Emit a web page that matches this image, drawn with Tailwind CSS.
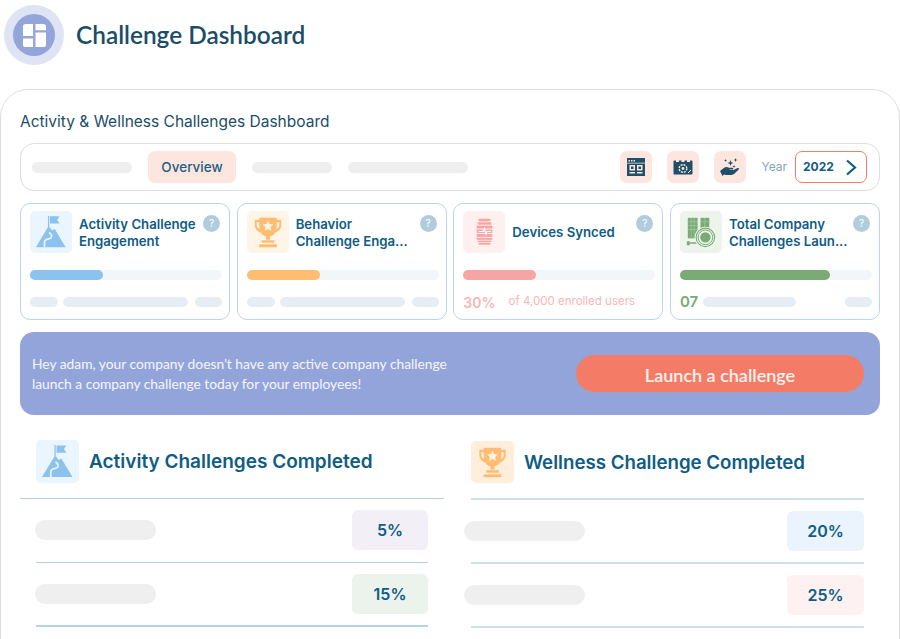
<!DOCTYPE html>
<html lang="en">
<head>
    <meta charset="UTF-8">
    <meta name="viewport" content="width=device-width, initial-scale=1.0">
    <title>Challenge Dashboard</title>
    <script src="https://cdn.jsdelivr.net/npm/@tailwindcss/browser@4"></script>
</head>
<body class="bg-white font-['Inter',sans-serif] h-[639px] overflow-hidden">
    <!-- shared icons -->
    <svg class="hidden">
        <symbol id="ico-mountain" viewBox="0 0 43 43">
            <path fill="#8bc3ee" d="M18.400 5h1.300v11l3 4 2.600-1.600L36.500 37H6l12.400-20.500z"/>
            <path fill="#8bc3ee" d="M20.500 5.500h9.800l-2.400 3.600 2.400 3.600h-9.800z"/>
            <path fill="none" stroke="#eaf4fd" stroke-width="1.700" d="M19.500 22c2.500 1.500 3 3.500 2.200 5.200-1 1.800-6 .8-6.700 3.800-.3 2-.2 4-.2 6"/>
        </symbol>
        <symbol id="ico-trophy" viewBox="0 0 43 43">
            <path fill="#ffbd72" d="M12.500 7h18v2h4.500v5.500c0 4-3 6.500-6 7.500-1 2-3 3.500-5.500 4v3.500h-4v-3.500c-2.500-.5-4.500-2-5.500-4-3-1-6-3.500-6-7.500V9h4.500zm-2.500 4.500v3c0 1.500 1 3 2.800 4-.2-2-.3-4.500-.3-7zm23 0h-2.500c0 2.500-.1 5-.3 7 1.800-1 2.800-2.500 2.800-4z"/>
            <path fill="#ffbd72" d="M15 30h13v2.500H15zM12.500 34h18v3h-18z"/>
            <path fill="#fff3e6" d="M21.500 9.800l1.700 3.500 3.800.5-2.800 2.600.7 3.800-3.400-1.800-3.400 1.800.7-3.800-2.800-2.600 3.800-.5z"/>
        </symbol>
        <symbol id="ico-watch" viewBox="0 0 43 43">
            <g fill="#f6a5a5">
                <rect x="16" y="8" width="12" height="2.500" rx=".5"/>
                <rect x="15" y="11.500" width="14" height="2.500"/>
                <rect x="14" y="15" width="16" height="3"/>
                <rect x="14" y="19" width="16" height="3.500"/>
                <rect x="14" y="23.500" width="16" height="3"/>
                <rect x="14" y="27.500" width="16" height="2"/>
                <rect x="15" y="30.300" width="14" height="1.500"/>
                <rect x="16" y="32.500" width="12" height="2"/>
            </g>
            <path fill="none" stroke="#fff" stroke-width="1.100" d="M16 21h5l1-3 1.500 6 1-3h4"/>
        </symbol>
        <symbol id="ico-company" viewBox="0 0 43 43">
            <g fill="#7aab75">
                <rect x="8" y="7" width="10" height="21"/>
                <rect x="21" y="7" width="9" height="11"/>
                <rect x="7" y="31" width="3" height="4"/>
                <rect x="10" y="32" width="8" height="1.500"/>
            </g>
            <path stroke="#a9c9a6" stroke-width=".7" d="M11.500 7v21M14.500 7v21M25.500 7v11M8 11h10M8 15h10M8 19h10M21 11h9"/>
            <circle cx="26" cy="27" r="11" fill="#edf4ec"/>
            <circle cx="26" cy="27" r="9.500" fill="none" stroke="#7aab75" stroke-width="1.100"/>
            <circle cx="26" cy="27" r="7.500" fill="none" stroke="#7aab75" stroke-width="1"/>
            <circle cx="26" cy="27" r="5.300" fill="#7aab75"/>
        </symbol>
    </svg>

    <!-- page title -->
    <header class="flex items-center gap-3 pl-1 pt-[5px]">
        <div class="w-[60px] h-[60px] rounded-full bg-[#dfe4f4] flex items-center justify-center">
            <div class="w-[42px] h-[42px] rounded-full bg-[#94a5da] flex items-center justify-center">
                <svg width="25" height="25" viewBox="0 0 26 26" fill="#fff">
                    <path d="M4 1h7.500v12.500H1V4a3 3 0 0 1 3-3z"/>
                    <path d="M14 1h8a3 3 0 0 1 3 3v3.500H14z"/>
                    <path d="M1 16h10.500v9H3a2 2 0 0 1-2-2z"/>
                    <path d="M14 10h11v13a2 2 0 0 1-2 2h-9z"/>
                </svg>
            </div>
        </div>
        <h1 class="font-['Lato',sans-serif] font-semibold text-[24.400px] leading-none text-[#1b4d68]">Challenge Dashboard</h1>
    </header>

    <main class="mt-6 h-[560px] border border-[#dedede] rounded-t-[28px] px-[19px] pt-[23px]">
        <h2 class="text-[15.500px] leading-[18px] text-[#1b4d68]">Activity &amp; Wellness Challenges Dashboard</h2>

        <!-- tabs -->
        <div class="mt-[12px] h-[48px] border border-[#dedede] rounded-[14px] flex items-center pl-[11px] pr-[12px]">
            <div class="w-[100px] h-[11px] rounded-full bg-[#eeeeee]"></div>
            <div class="ml-4 w-[88px] h-[32px] rounded-[7px] bg-[#fde5e0] flex items-center justify-center text-[13.500px] font-medium text-[#1c5f80]">Overview</div>
            <div class="ml-4 w-[80px] h-[11px] rounded-full bg-[#eeeeee]"></div>
            <div class="ml-4 w-[120px] h-[11px] rounded-full bg-[#eeeeee]"></div>

            <div class="ml-auto w-8 h-8 rounded-[7px] bg-[#fde5e0] flex items-center justify-center">
                <svg width="18" height="18" viewBox="0 0 18 18">
                    <path fill="#1f5068" d="M0 0h18v18H0z"/>
                    <path fill="#fde5e0" d="M1.500 2h1.500v1.500H1.500zM4 2h1.500v1.500H4zM6.500 2H8v1.500H6.500zM0 4.800h18v.8H0zM2.500 7h5.500v5.500H2.500zM10 7h5.500v5.500H10zM2.500 14h5.500v1.500H2.500zM10 14h5.500v1.500H10z"/>
                    <path fill="#1f5068" d="M4 8.500h2.500v2.500H4zM11.500 8.500H14v2.500h-2.500z"/>
                </svg>
            </div>
            <div class="ml-[15px] w-8 h-8 rounded-[7px] bg-[#fde5e0] flex items-center justify-center">
                <svg width="20" height="18" viewBox="0 0 20 18">
                    <path fill="#1f5068" d="M1.500 2.500h17a1 1 0 0 1 1 1v12a1 1 0 0 1-1 1h-17a1 1 0 0 1-1-1v-12a1 1 0 0 1 1-1z"/>
                    <path fill="#fde5e0" d="M3 1h3v3H3zM8.500 1h3v3h-3zM14 1h3v3h-3z"/>
                    <circle cx="10" cy="10.500" r="3.800" fill="none" stroke="#fde5e0" stroke-width="1.400" stroke-dasharray="2 1"/>
                    <circle cx="10" cy="10.500" r="1.400" fill="#fde5e0"/>
                    <path stroke="#fde5e0" stroke-width="1" d="M15 15l3-3"/>
                </svg>
            </div>
            <div class="ml-[15px] w-8 h-8 rounded-[7px] bg-[#fde5e0] flex items-center justify-center">
                <svg width="20" height="20" viewBox="0 0 20 20" fill="#1f5068">
                    <path d="M10.500 3l.8 2.200 2.200.8-2.200.8-.8 2.200-.8-2.200L7.500 6l2.200-.8zM15.500 1l.5 1.500 1.500.5-1.500.5-.5 1.500-.5-1.500L13.500 3l1.500-.5zM5.500 2l.4 1.100 1.100.4-1.100.4-.4 1.100-.4-1.100L4 3.500l1.100-.4zM14 8l.4 1.100 1.100.4-1.100.4-.4 1.100-.4-1.100-1.100-.4 1.100-.4z"/>
                    <path d="M0 14l4.500-3.500c1.500-1 3-.5 4.500.2h3.500c1 0 1.200 1.800 0 1.800H9.500v.5h4l4-2c1.500-.5 2 1 1 1.800L14 17c-1 .7-2 1-3 1H6l-2-.5L2.500 19z"/>
                </svg>
            </div>
            <span class="ml-[15px] text-[12px] text-[#7ea7bf]">Year</span>
            <div class="ml-2 w-[72px] h-[32px] rounded-[7px] border border-[#f47c66] flex items-center justify-between pl-[7px] pr-[9px] text-[12px] font-bold text-[#0f5c85]">
                2022
                <svg width="12" height="17" viewBox="0 0 12 17" fill="none" stroke="#0f5c85" stroke-width="2.200"><path d="M2 1.500l8 7-8 7"/></svg>
            </div>
        </div>

        <!-- stat cards -->
        <div class="mt-3 grid grid-cols-4 gap-[6.670px]">
            <div class="h-[117px] border border-[#bcd5e3] rounded-[10px] pl-[9px] pr-[7px] pt-[7px]">
                <div class="flex h-[43px]">
                    <div class="w-[42px] h-[42px] rounded-[5px] bg-[#ebf5fd] shrink-0"><svg class="w-full h-full"><use href="#ico-mountain"/></svg></div>
                    <p class="ml-[7px] flex-1 self-center text-[13.200px] leading-[17px] font-semibold text-[#0f5c85]">Activity Challenge Engagement</p>
                    <span class="mt-1 mr-[2px] w-[17px] h-[17px] rounded-full bg-[#b1cddd] text-white text-[10px] leading-[17px] text-center">?</span>
                </div>
                <div class="mt-4 h-[10px] rounded-full bg-[#f1f6f9]"><div class="h-full w-[38%] rounded-full bg-[#8bc3ee]"></div></div>
                <div class="mt-[17px] flex gap-[5px]">
                    <div class="w-7 h-[10px] rounded-full bg-[#e6eef3]"></div>
                    <div class="flex-1 h-[10px] rounded-full bg-[#e6eef3]"></div>
                    <div class="ml-[2px] w-[27px] h-[10px] rounded-full bg-[#e6eef3]"></div>
                </div>
            </div>

            <div class="h-[117px] border border-[#bcd5e3] rounded-[10px] pl-[9px] pr-[7px] pt-[7px]">
                <div class="flex h-[43px]">
                    <div class="w-[42px] h-[42px] rounded-[5px] bg-[#fff4e8] shrink-0"><svg class="w-full h-full"><use href="#ico-trophy"/></svg></div>
                    <p class="ml-[7px] flex-1 self-center text-[13.200px] leading-[17px] font-semibold text-[#0f5c85]">Behavior<br>Challenge Enga...</p>
                    <span class="mt-1 mr-[2px] w-[17px] h-[17px] rounded-full bg-[#b1cddd] text-white text-[10px] leading-[17px] text-center">?</span>
                </div>
                <div class="mt-4 h-[10px] rounded-full bg-[#f1f6f9]"><div class="h-full w-[38%] rounded-full bg-[#ffbd72]"></div></div>
                <div class="mt-[17px] flex gap-[5px]">
                    <div class="w-7 h-[10px] rounded-full bg-[#e6eef3]"></div>
                    <div class="flex-1 h-[10px] rounded-full bg-[#e6eef3]"></div>
                    <div class="ml-[2px] w-[27px] h-[10px] rounded-full bg-[#e6eef3]"></div>
                </div>
            </div>

            <div class="h-[117px] border border-[#bcd5e3] rounded-[10px] pl-[9px] pr-[7px] pt-[7px]">
                <div class="flex h-[43px]">
                    <div class="w-[42px] h-[42px] rounded-[5px] bg-[#fff0f0] shrink-0"><svg class="w-full h-full"><use href="#ico-watch"/></svg></div>
                    <p class="ml-[7px] flex-1 self-center text-[13.200px] leading-[17px] font-semibold text-[#0f5c85]">Devices Synced</p>
                    <span class="mt-1 mr-[2px] w-[17px] h-[17px] rounded-full bg-[#b1cddd] text-white text-[10px] leading-[17px] text-center">?</span>
                </div>
                <div class="mt-4 h-[10px] rounded-full bg-[#f1f6f9]"><div class="h-full w-[38%] rounded-full bg-[#f6a5a5]"></div></div>
                <div class="mt-[12px] flex items-center h-5">
                    <span class="text-[14px] font-semibold text-[#f9b6b6]">30%</span>
                    <span class="ml-[13px] text-[11.500px] text-[#f9b6b6]">of 4,000 enrolled users</span>
                </div>
            </div>

            <div class="h-[117px] border border-[#bcd5e3] rounded-[10px] pl-[9px] pr-[7px] pt-[7px]">
                <div class="flex h-[43px]">
                    <div class="w-[42px] h-[42px] rounded-[5px] bg-[#edf4ec] shrink-0"><svg class="w-full h-full"><use href="#ico-company"/></svg></div>
                    <p class="ml-[7px] flex-1 self-center text-[13.200px] leading-[17px] font-semibold text-[#0f5c85]">Total Company<br>Challenges Laun...</p>
                    <span class="mt-1 mr-[2px] w-[17px] h-[17px] rounded-full bg-[#b1cddd] text-white text-[10px] leading-[17px] text-center">?</span>
                </div>
                <div class="mt-4 h-[10px] rounded-full bg-[#f1f6f9]"><div class="h-full w-[78%] rounded-full bg-[#7aab75]"></div></div>
                <div class="mt-[12px] flex items-center h-5">
                    <span class="text-[15px] font-semibold text-[#7aab75]">07</span>
                    <div class="ml-[5px] w-[93px] h-[10px] rounded-full bg-[#e6eef3]"></div>
                    <div class="ml-auto w-[27px] h-[10px] rounded-full bg-[#e6eef3]"></div>
                </div>
            </div>
        </div>

        <!-- banner -->
        <div class="mt-3 h-[83px] rounded-[14px] bg-[#93a4da] flex items-center justify-between pl-3 pr-4">
            <p class="font-['Lato',sans-serif] text-[13.800px] leading-[20px] text-white/90">Hey adam, your company doesn’t have any active company challenge<br>launch a company challenge today for your employees!</p>
            <button class="w-[288px] h-[37px] pt-[3px] rounded-full bg-[#f47c66] font-['Lato',sans-serif] font-semibold text-[18px] text-white/90">Launch a challenge</button>
        </div>

        <!-- completed lists -->
        <div class="flex">
            <section class="w-[424px]">
                <div class="h-[84px] pt-[25px] border-b border-[#b4d2e3] flex items-start pl-4">
                    <div class="w-[43px] h-[43px] rounded-[5px] bg-[#ebf5fd] shrink-0"><svg class="w-full h-full"><use href="#ico-mountain"/></svg></div>
                    <h3 class="ml-[10px] mt-[10px] text-[19px] leading-6 font-semibold text-[#0f5c85]">Activity Challenges Completed</h3>
                </div>
                <div class="ml-4 w-[392px] h-[64px] pb-px border-b border-[#b4d2e3] flex items-center justify-between">
                    <div class="-ml-px w-[121px] h-5 rounded-full bg-[#efefef]"></div>
                    <div class="w-[76px] h-10 rounded-[6px] bg-[#f3eff7] flex items-center justify-center text-[16px] font-semibold text-[#0f5c85]">5%</div>
                </div>
                <div class="ml-4 w-[392px] h-[64px] border-b-2 border-[#b4d2e3] flex items-center justify-between">
                    <div class="-ml-px w-[121px] h-5 rounded-full bg-[#efefef]"></div>
                    <div class="w-[76px] h-10 rounded-[6px] bg-[#ecf3ec] flex items-center justify-center text-[16px] font-semibold text-[#0f5c85]">15%</div>
                </div>
            </section>

            <section class="ml-[27px] w-[393px]">
                <div class="h-[85px] pt-[26px] border-b-2 border-[#cfe0ea] flex items-start">
                    <div class="w-[43px] h-[42px] rounded-[5px] bg-[#ffeedb] shrink-0"><svg class="w-full h-full"><use href="#ico-trophy"/></svg></div>
                    <h3 class="ml-[10px] mt-[10px] text-[18.700px] leading-6 font-semibold text-[#0f5c85]">Wellness Challenge Completed</h3>
                </div>
                <div class="h-[64px] border-b-2 border-[#cfe0ea] flex items-center justify-between">
                    <div class="-ml-[7px] w-[121px] h-5 rounded-full bg-[#efefef]"></div>
                    <div class="w-[77px] h-10 rounded-[6px] bg-[#ebf4fc] flex items-center justify-center text-[16px] font-semibold text-[#0f5c85]">20%</div>
                </div>
                <div class="h-[64px] border-b-2 border-[#cfe0ea] flex items-center justify-between">
                    <div class="-ml-[7px] w-[121px] h-5 rounded-full bg-[#efefef]"></div>
                    <div class="w-[77px] h-10 rounded-[6px] bg-[#fdf1f1] flex items-center justify-center text-[16px] font-semibold text-[#0f5c85]">25%</div>
                </div>
            </section>
        </div>
    </main>
</body>
</html>
